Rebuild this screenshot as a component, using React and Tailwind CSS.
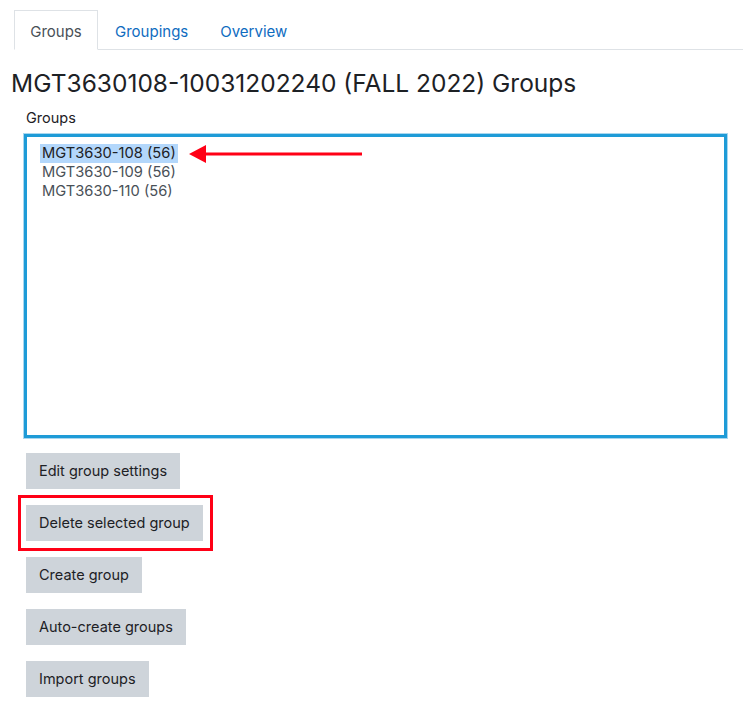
export default function App() {
  const btn = "bg-[#ced4da] text-[#1d2125] text-[14.5px] leading-[22px] px-[13px] py-[7px] w-fit";
  return (
    <div className="w-[743px] h-[709px] bg-white overflow-hidden text-[#1d2125]" style={{ fontFamily: "Inter, 'Noto Sans', sans-serif" }}>
      <div className="pt-[10px] pl-[14px]">
        <div className="flex border-b border-[#dee2e6] text-[15px] leading-[20px]">
          <div className="h-[40px] w-[84px] -mb-px pt-[4px] flex items-center justify-center border border-b-white border-[#dee2e6] bg-white text-[#495057]">Groups</div>
          <div className="h-[39px] pt-[4px] pl-[17px] pr-[32px] flex items-center text-[#0f6cbf]">Groupings</div>
          <div className="h-[39px] pt-[4px] flex items-center text-[#0f6cbf]">Overview</div>
        </div>
      </div>
      <h2 className="pl-[11px] mt-[17px] text-[24.5px] leading-[32px] font-normal">MGT3630108-10031202240 (FALL 2022) Groups</h2>
      <div className="pl-[26px] mt-[9px] text-[14.5px] leading-[20px]">Groups</div>
      <div className="ml-[23px] mt-[5px] w-[705px] h-[306px] border border-[#a8d7ef] p-0">
        <div className="w-full h-full border-[3px] border-[#1e9bd7] pt-[7px] pl-[13px] text-[14.7px] leading-[19px] text-[#495057]">
          <div className="flex items-center">
            <span className="bg-[#b3d7fb] text-[#1d2125] px-[2px]">MGT3630-108 (56)</span>
            <svg width="176" height="18" viewBox="0 0 176 18" className="ml-[11px]">
              <polygon points="0,9 17,0 17,18" fill="#ff0016" />
              <rect x="15" y="7.5" width="158" height="3" fill="#ff0016" />
            </svg>
          </div>
          <div className="px-[2px]">MGT3630-109 (56)</div>
          <div className="px-[2px]">MGT3630-110 (56)</div>
        </div>
      </div>
      <div className="pl-[26px] mt-[14px] flex flex-col">
        <div className={btn}>Edit group settings</div>
        <div className="-ml-[8px] mt-[6px] w-[195px] border-[3px] border-[#ff0016] pl-[5px] py-[7px]">
          <div className={btn}>Delete selected group</div>
        </div>
        <div className={btn + " mt-[6px]"}>Create group</div>
        <div className={btn + " mt-[16px]"}>Auto-create groups</div>
        <div className={btn + " mt-[16px]"}>Import groups</div>
      </div>
    </div>
  );
}
